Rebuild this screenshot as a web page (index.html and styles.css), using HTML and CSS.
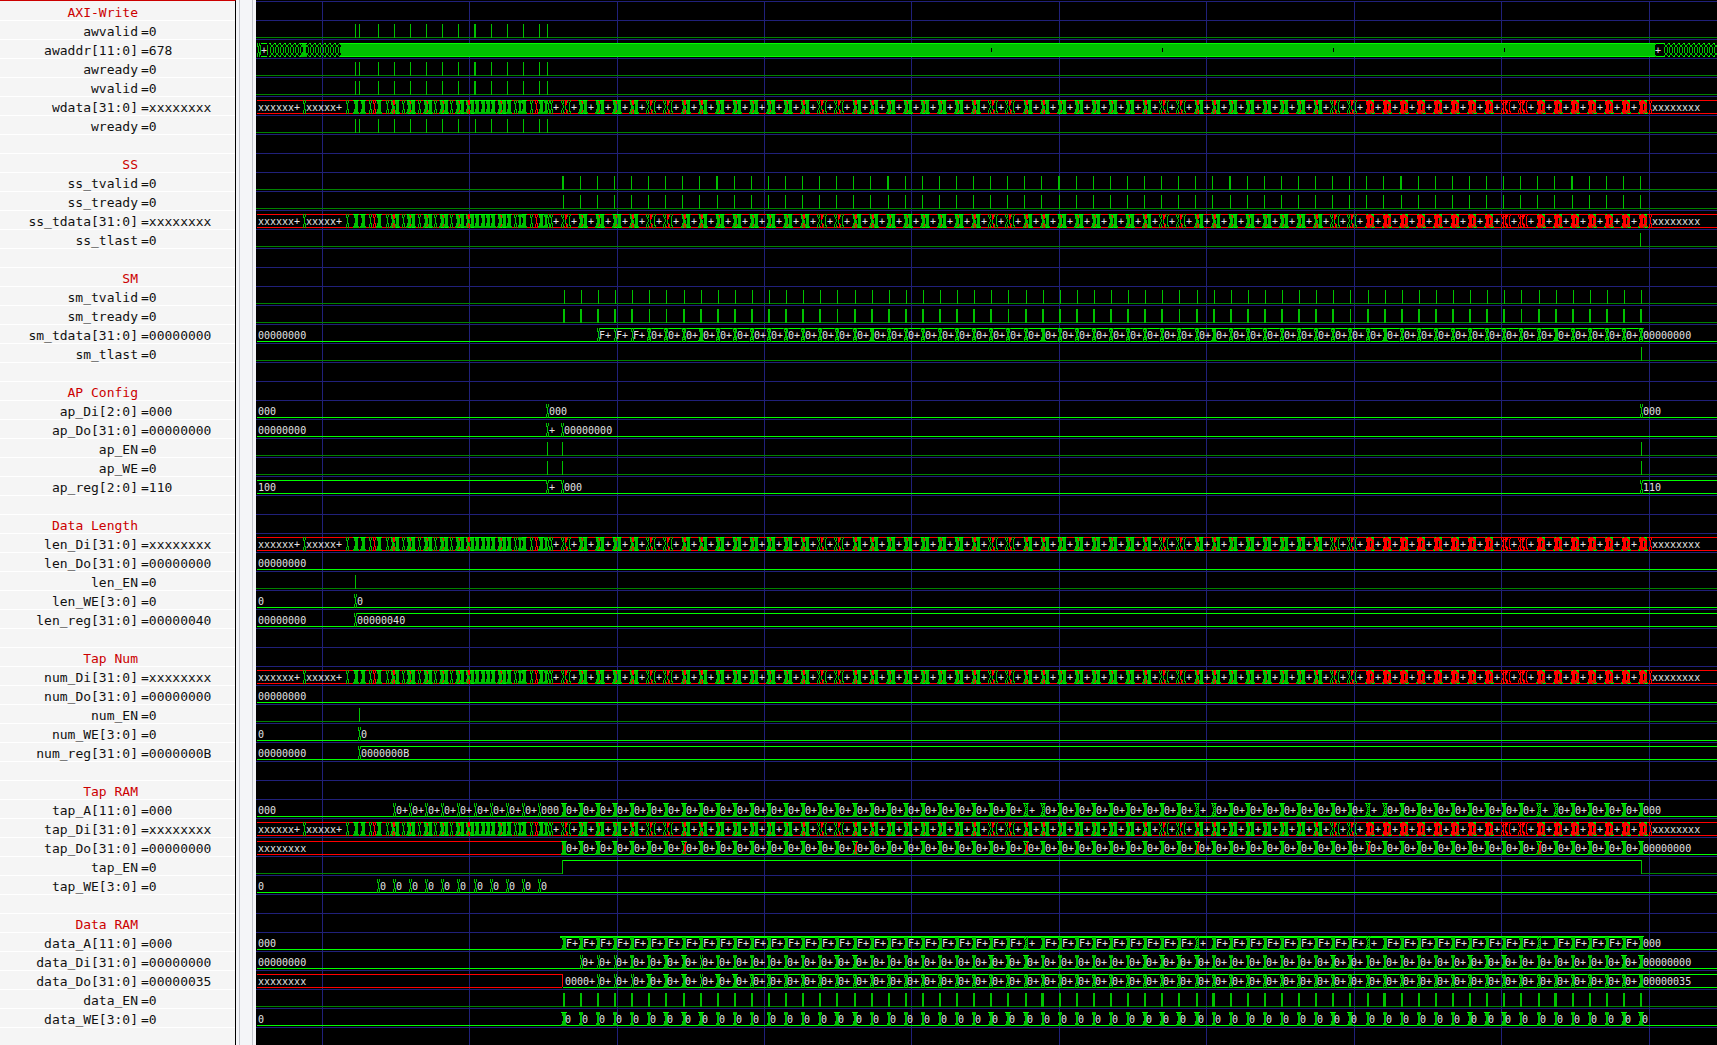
FILE: index.html
```
<!DOCTYPE html>
<html lang="en">
<head>
<meta charset="utf-8">
<title>FIR waveform viewer</title>
<link rel="stylesheet" href="styles.css">
</head>
<body>
<main class="viewer">
  <section class="signals">
    <table class="names">
      <tbody>
        <tr class="group"><th>AXI-Write</th><td></td></tr>
        <tr><th>awvalid</th><td>=0</td></tr>
        <tr><th>awaddr[11:0]</th><td>=678</td></tr>
        <tr><th>awready</th><td>=0</td></tr>
        <tr><th>wvalid</th><td>=0</td></tr>
        <tr><th>wdata[31:0]</th><td>=xxxxxxxx</td></tr>
        <tr><th>wready</th><td>=0</td></tr>
        <tr><th></th><td></td></tr>
        <tr class="group"><th>SS</th><td></td></tr>
        <tr><th>ss_tvalid</th><td>=0</td></tr>
        <tr><th>ss_tready</th><td>=0</td></tr>
        <tr><th>ss_tdata[31:0]</th><td>=xxxxxxxx</td></tr>
        <tr><th>ss_tlast</th><td>=0</td></tr>
        <tr><th></th><td></td></tr>
        <tr class="group"><th>SM</th><td></td></tr>
        <tr><th>sm_tvalid</th><td>=0</td></tr>
        <tr><th>sm_tready</th><td>=0</td></tr>
        <tr><th>sm_tdata[31:0]</th><td>=00000000</td></tr>
        <tr><th>sm_tlast</th><td>=0</td></tr>
        <tr><th></th><td></td></tr>
        <tr class="group"><th>AP Config</th><td></td></tr>
        <tr><th>ap_Di[2:0]</th><td>=000</td></tr>
        <tr><th>ap_Do[31:0]</th><td>=00000000</td></tr>
        <tr><th>ap_EN</th><td>=0</td></tr>
        <tr><th>ap_WE</th><td>=0</td></tr>
        <tr><th>ap_reg[2:0]</th><td>=110</td></tr>
        <tr><th></th><td></td></tr>
        <tr class="group"><th>Data Length</th><td></td></tr>
        <tr><th>len_Di[31:0]</th><td>=xxxxxxxx</td></tr>
        <tr><th>len_Do[31:0]</th><td>=00000000</td></tr>
        <tr><th>len_EN</th><td>=0</td></tr>
        <tr><th>len_WE[3:0]</th><td>=0</td></tr>
        <tr><th>len_reg[31:0]</th><td>=00000040</td></tr>
        <tr><th></th><td></td></tr>
        <tr class="group"><th>Tap Num</th><td></td></tr>
        <tr><th>num_Di[31:0]</th><td>=xxxxxxxx</td></tr>
        <tr><th>num_Do[31:0]</th><td>=00000000</td></tr>
        <tr><th>num_EN</th><td>=0</td></tr>
        <tr><th>num_WE[3:0]</th><td>=0</td></tr>
        <tr><th>num_reg[31:0]</th><td>=0000000B</td></tr>
        <tr><th></th><td></td></tr>
        <tr class="group"><th>Tap RAM</th><td></td></tr>
        <tr><th>tap_A[11:0]</th><td>=000</td></tr>
        <tr><th>tap_Di[31:0]</th><td>=xxxxxxxx</td></tr>
        <tr><th>tap_Do[31:0]</th><td>=00000000</td></tr>
        <tr><th>tap_EN</th><td>=0</td></tr>
        <tr><th>tap_WE[3:0]</th><td>=0</td></tr>
        <tr><th></th><td></td></tr>
        <tr class="group"><th>Data RAM</th><td></td></tr>
        <tr><th>data_A[11:0]</th><td>=000</td></tr>
        <tr><th>data_Di[31:0]</th><td>=00000000</td></tr>
        <tr><th>data_Do[31:0]</th><td>=00000035</td></tr>
        <tr><th>data_EN</th><td>=0</td></tr>
        <tr><th>data_WE[3:0]</th><td>=0</td></tr>
        <tr><th></th><td></td></tr>
      </tbody>
    </table>
  </section>
  <div class="splitter"></div>
  <section class="waves" id="waves"></section>
</main>
<script src="waves.js"></script>
</body>
</html>
```
FILE: styles.css
```
* { box-sizing: border-box; }

body {
  margin: 0;
  background: #f4f5f8;
  font-family: "DejaVu Sans Mono", monospace;
}

.viewer {
  display: flex;
  height: 100vh;
  overflow: hidden;
}

.signals {
  flex: none;
  width: 236px;
  border-top: 1px solid #cc0000;
  border-right: 1px solid #000;
  background: #f5f5f5;
}

.names {
  width: 100%;
  table-layout: fixed;
  border-collapse: separate;
  border-spacing: 0;
  font-size: 13px;
  line-height: 14px;
  color: #111;
}

.names th,
.names td {
  height: 19px;
  padding: 4px 0 0;
  border-bottom: 1px solid #fff;
  font-weight: normal;
  white-space: pre;
}

.names tr:first-child th,
.names tr:first-child td { height: 20px; padding-top: 5px; }

.names th { width: 138px; text-align: right; }
.names td { padding-left: 3px; text-align: left; }
.names .group th { color: #cc0000; }

.splitter {
  flex: none;
  width: 20px;
  padding: 0 3px;
  background: #f4f5f8;
}

.splitter::before {
  content: "";
  display: block;
  height: 100%;
  border-left: 1px solid #c3c5cc;
  border-right: 1px solid #c3c5cc;
}

.waves {
  flex: 1;
  min-width: 0;
  padding-top: 1px;
  background: #000;
  overflow: hidden;
}

.wave {
  display: block;
  width: 100%;
  height: 19px;
  overflow: hidden;
  shape-rendering: crispEdges;
}

.grid { fill: #20207a; }
.low { fill: #008200; }
.edge { fill: #00c000; }
.high { fill: #00ff00; }
.unknown { fill: #ff0000; }
.void { fill: #000; }

.value {
  fill: #e4e4e4;
  font-size: 10px;
  white-space: pre;
}
```
FILE: waves.js
```
const START = 256;
const END = 4000;
const TOP = 4;
const BOTTOM = 17;
const GRID = [322, 469, 617, 764, 911, 1059, 1206, 1354, 1501, 1649];
const CYCLES = Array.from({ length: 64 }, (_, n) => n);
const cycle = n => Math.floor(564.3 + 17.1 * n);
const ssCycle = n => Math.floor(563.15 + 17.1 * n);

/* Transition shapes: G bright, g normal, r unknown, one character per pixel. */
const SHAPES = {
  cross: ["g.g", "g.g", "g.g", "gg.", ".g.", ".g.", ".g.", ".g.", ".g.", ".gg", "g.g", "g.g", "g.g", "g.g"],
  crossRed: ["r.r", "r.r", "r.r", "rr.", ".r.", ".r.", ".r.", ".r.", ".r.", ".rr", "r.r", "r.r", "r.r", "r.r"],
  beam: ["GGGGGG", ".gggg.", ".gggg.", ".gggg.", "..ggg.", "..ggg.", "..ggg.", "..ggg.", "..ggg.", ".gggg.", ".gggg.", ".gggg.", "gggggg", "gggggg"],
  slim: [".gggg.", ".gggg.", ".gggg.", "..gg..", "..gg..", "..gg..", "..gg..", "..gg..", "..gg..", "..gg..", "..gg..", ".gggg.", ".gggg.", ".gggg."],
  beamX: ["GGGGGG", ".g.grr", ".gg.r.", ".gggr.", "..grr.", "..grr.", "..grr.", "..grr.", "..grr.", ".ggrr.", ".ggrg.", ".grgr.", "ggrgrg", "gggggg"],
  knot: ["gg..gg", ".gggg.", ".g.gg.", ".gggg.", "..ggg.", "..gg..", "..gg..", "..gg..", "..ggg.", ".gggg.", ".g.gg.", ".gggg.", ".g..g.", "gg..gg"],
  mesh: ["GGgGGg", ".g.gg.", ".gg.g.", ".g.gg.", "..ggg.", "..g.g.", "..ggg.", "..g.g.", "..ggg.", ".gg.g.", ".gggg.", ".g.gg.", "gggggg", "gg.ggg"],
  pair: ["gGGGgGGGGg", ".ggrrgggg.", ".gggrgggg.", ".gggrgggg.", ".gggg.ggg.", "..ggg.ggg.", "..ggg.ggg.", "..ggg.ggg.", "..ggg.ggg.", ".gggg.ggg.", ".gggrgggg.", ".gggrgggg.", "gggrgggggg", "ggGGGgGGGg"],
  pairX: ["gGgrrGGGGg", ".grrrgggg.", ".ggrrgggg.", ".ggrrgggg.", ".ggrr.ggg.", "..gg..ggg.", "..ggg.ggg.", "..ggg.ggg.", "..ggg.ggg.", ".ggrg.ggg.", ".ggrrgggg.", ".grgrgggg.", "ggrgrggggg", "ggGrrgGGGg"],
  loose: ["g.grrrrg.g", "g.g.rrg..g", "g.g.rrg.g.", ".gg.rr..g.", ".g..rr..g.", "..g.r...g.", "..g.g...g.", "..g.g...g.", ".g..g...g.", ".g..gr..g.", "g.g..rr.g.", "g.g..rg.gg", "g.gr.rg..g", "g.grrrrg.g"],
  pairRed: ["rgGrrrGGGr", ".rrrrrrgg.", ".rrrrrrrg.", ".rrrrrrrr.", ".rrrr.grr.", "..rrr.grr.", "..rrr.rrr.", "..rrr.rrr.", "..rrr.rrr.", ".rrrr.rrg.", ".rrrrrrrr.", ".rrrrrrgr.", "grrrrgrrrg", "gGrrrrgGGg"],
  looseRed: ["r.rrrrrr.r", "r.r.rrr..r", "r.rrrrr.r.", ".rr.rr..r.", ".rr.rr..r.", "..r.r...r.", "..r.r...r.", "..r.r...r.", ".rr.r...r.", ".rr.rr..r.", "r.r.rrr.r.", "r.r..rr.rr", "r.rr.rr..r", "grrrgrrr.r"],
  lattice: ["GG...", ".g..g", "..gg.", "..gg.", ".g..g", ".g..g", ".g..g", ".g..g", ".g..g", ".g..g", "..gg.", "..gg.", ".g..g", "GG..."]
};
const INK = { G: "high", g: "edge", r: "unknown" };

class Wave {
  constructor() {
    this.paths = { low: "", high: "", unknown: "", edge: "", void: "" };
    this.labels = "";
  }
  box(kind, x, y, w, h) {
    this.paths[kind] += `M${x - START} ${y}h${w}v${h}h${-w}z`;
    return this;
  }
  line(kind, x1, x2, y) { return this.box(kind, x1, y, x2 - x1, 1); }
  floor(kind = "high") { return this.line(kind, 257, END, BOTTOM); }
  roof(x1, x2, kind = "high") { return this.line(kind, x1, x2, TOP); }
  spike(x, w = 1) {
    this.box("edge", x, TOP, w, 14);
    if (w > 1) this.box("high", x, TOP, w, 1);
    return this;
  }
  shape(name, x) {
    SHAPES[name].forEach((row, y) => {
      for (const run of row.matchAll(/G+|g+|r+/g)) {
        this.box(INK[run[0][0]], x + run.index, TOP + y, run[0].length, 1);
      }
    });
    return this;
  }
  text(x, s) {
    this.labels += `<text class="value" x="${x - START}" y="15">${s}</text>`;
    return this;
  }
  render() {
    const grid = GRID.map(x => `M${x - START} 0h1v19h-1z`).join("") + `M0 0h${END}v1h${-END}z`;
    const order = ["low", "unknown", "high", "edge", "void"];
    const body = order.filter(k => this.paths[k]).map(k => `<path class="${k}" d="${this.paths[k]}"/>`).join("");
    return `<svg class="wave"><path class="grid" d="${grid}"/>${body}${this.labels}</svg>`;
  }
}

const blank = () => new Wave();
const bit = (...xs) => {
  const w = new Wave().line("low", START, END, BOTTOM);
  xs.forEach(x => Array.isArray(x) ? w.spike(x[0], x[1]) : w.spike(x));
  return w;
};
const bus = first => new Wave().floor().text(258, first);

const AW = [355, 359, 378, 394, 410, 426, 442, 458, 475, 491, 507, 523, 539, 547];
const WRITES = AW.slice(2, 13);
const awBit = () => bit(...AW.map(x => x === 475 ? [474, 2] : x));

function address() {
  const w = new Wave();
  w.shape("cross", 257).roof(261, 267).line("high", 261, 267, BOTTOM)
    .box("edge", 260, 6, 1, 10).box("edge", 267, 6, 1, 10).text(261, "+");
  for (let x = 269; x < 340; x += 5) w.shape("lattice", x);
  w.shape("beam", 301);
  w.box("edge", 341, 5, 1314, 12).roof(340, 1663).line("high", 340, 1663, BOTTOM);
  [991, 1162, 1333, 1504].forEach(x => w.box("void", x, 9, 1, 4));
  w.box("edge", 1655, 4, 1, 2).box("edge", 1655, 16, 1, 2).text(1655, "+");
  for (let x = 1663; x < END; x += 5) w.shape("lattice", x);
  return w;
}

function unknownData() {
  const w = new Wave().floor("unknown").roof(257, END, "unknown").text(258, "xxxxxx+").text(306, "xxxxx+");
  w.shape("cross", 303);
  [346, 369, 386, 402, 418, 434, 450, 514, 530, 547, 550].forEach(x => w.shape("cross", x));
  [373, 535].forEach(x => w.shape("crossRed", x));
  [406, 423, 439, 455, 497].forEach(x => w.shape("pair", x));
  [390, 465].forEach(x => w.shape("pairX", x));
  [353, 360, 376, 474, 480, 485, 490, 506, 521, 538].forEach(x => w.shape("beam", x));
  [517, 543].forEach(x => w.shape("slim", x));
  w.text(553, "+");
  CYCLES.forEach(n => {
    const x = cycle(n) - 3;
    const d = n % 10;
    const loose = n === 0 || d === 5 || d === 6;
    let name;
    if (n > 46) name = loose ? "looseRed" : "pairRed";
    else if (loose) name = "loose";
    else name = d === 7 || d === 8 || d === 4 ? "pairX" : "pair";
    w.shape(name, x);
    if (n < 63) w.text(x + 10, "+");
  });
  return w.shape("crossRed", 1649).text(1652, "xxxxxxxx");
}

function smData() {
  const w = bus("00000000").roof(599, 1643);
  CYCLES.slice(2).forEach(n => {
    const x = cycle(n);
    if (n < 5) w.shape("cross", x - 1);
    else w.shape(n % 10 === 8 ? "beam" : "knot", x - 3);
    if (n < 63) w.text(n < 5 ? x + 1 : x + 2, n < 5 ? "F+" : "0+");
  });
  return w.text(1643, "00000000");
}

function tapAddress() {
  const w = bus("000");
  WRITES.slice(1).forEach((x, i, all) => {
    w.shape("cross", x - 1).text(x + 2, i === all.length - 1 ? "000" : "0+");
  });
  CYCLES.forEach(n => {
    const x = cycle(n);
    const wrap = n > 20 && n % 10 === 7;
    w.shape(wrap || (n > 20 && n % 10 === 8) ? "mesh" : "beam", x - 3);
    if (n < 63) w.text(wrap ? x + 3 : x + 2, wrap ? "+" : "0+");
  });
  return w.text(1643, "000");
}

function tapOut() {
  const w = new Wave().text(258, "xxxxxxxx").line("unknown", 257, 562, TOP).line("unknown", 257, 562, BOTTOM)
    .line("high", 562, END, BOTTOM);
  CYCLES.forEach(n => {
    w.shape(n % 10 === 7 ? "beamX" : "beam", cycle(n) - 3);
    if (n < 63) w.text(cycle(n) + 2, "0+");
  });
  return w.box("unknown", 562, 5, 1, 12).text(1643, "00000000");
}

function tapWrite() {
  const w = bus("0");
  WRITES.forEach(x => w.shape("cross", x - 1).text(x + 2, "0"));
  return w;
}

function dataAddress() {
  const w = bus("000").box("high", 560, 4, 1083, 2);
  CYCLES.forEach(n => {
    const x = cycle(n);
    const wrap = n > 20 && n % 10 === 7;
    w.shape(wrap ? "mesh" : "beam", x - 3);
    if (n < 63) w.text(wrap ? x + 3 : x + 2, wrap ? "+" : "F+");
  });
  return w.text(1643, "000");
}

const BRIGHT = [0, 6, 7, 8, 16, 17, 25, 26, 27, 34, 35, 36, 37, 45, 46, 53, 54, 55, 62, 63];

function dataIn() {
  const w = bus("00000000");
  CYCLES.slice(1).forEach(n => {
    const x = cycle(n);
    if (n < 4 || n === 8) w.shape("cross", x - 1);
    else w.shape(BRIGHT.includes(n) ? "beam" : "slim", x - 3);
    if (n < 63) w.text(x + 1, "0+");
  });
  return w.text(1643, "00000000");
}

function dataOut() {
  const w = new Wave().text(258, "xxxxxxxx").line("unknown", 257, 562, TOP).line("unknown", 257, 562, BOTTOM)
    .box("unknown", 562, 4, 1, 13).line("high", 563, END, BOTTOM).roof(750, END).text(565, "0000+");
  CYCLES.slice(2).forEach(n => {
    const x = cycle(n);
    if (n < 5 || n === 8) w.shape("cross", x - 1);
    else w.shape(n < 11 || n === 63 ? "beam" : "knot", x - 3);
    if (n < 63) w.text(x + 1, "0+");
  });
  return w.text(1643, "00000035");
}

function dataWrite() {
  const w = bus("0");
  CYCLES.forEach(n => {
    w.shape(BRIGHT.includes(n) ? "beam" : "slim", cycle(n) - 3).text(cycle(n) + 1, "0");
  });
  return w;
}

const tapEnable = () => new Wave().line("low", START, 562, BOTTOM).box("edge", 562, TOP, 1, 14)
  .roof(562, 1642).box("edge", 1641, TOP, 1, 14).line("low", 1642, END, BOTTOM);

const apReg = () => new Wave().floor().roof(257, 546).roof(549, 562).roof(1643, END)
  .shape("cross", 546).shape("cross", 561).shape("cross", 1640)
  .text(258, "100").text(549, "+").text(564, "000").text(1643, "110");

const changing = (first, x, second) => bus(first).shape("cross", x - 1).text(x + 2, second);

const rows = [
  blank(), awBit(), address(), awBit(), awBit(), unknownData(), bit(...AW), blank(),
  blank(),
  bit(...CYCLES.map(n => n % 10 === 9 || n === 0 ? [ssCycle(n) - 1, 2] : ssCycle(n))),
  bit(...CYCLES.map(ssCycle)),
  unknownData(), bit(1640), blank(),
  blank(),
  bit(...CYCLES.map(cycle)),
  bit(...CYCLES.map(n => n === 5 || (n % 10 === 6) ? cycle(n) : [cycle(n) - 1, 2])),
  smData(), bit(1641), blank(),
  blank(),
  changing("000", 547, "000").shape("cross", 1640).text(1643, "000"),
  changing("00000000", 547, "+").shape("cross", 561).text(564, "00000000"),
  bit(547, 562, 1641), bit(547, 562, 1641), apReg(), blank(),
  blank(),
  unknownData(), bus("00000000"), bit(355), changing("0", 355, "0"),
  changing("00000000", 355, "00000040").roof(357, END), blank(),
  blank(),
  unknownData(), bus("00000000"), bit(359), changing("0", 359, "0"),
  changing("00000000", 359, "0000000B").roof(361, END), blank(),
  blank(),
  tapAddress(), unknownData(), tapOut(), tapEnable(), tapWrite(), blank(),
  blank(),
  dataAddress(), dataIn(), dataOut(),
  bit(...CYCLES.map(n => [cycle(n) - 1 - (n > 20 && n % 10 === 8 ? 1 : 0), n > 20 && n % 10 === 8 ? 3 : 2])),
  dataWrite(), blank()
];

document.getElementById("waves").innerHTML = rows.map(r => r.render()).join("");
```
